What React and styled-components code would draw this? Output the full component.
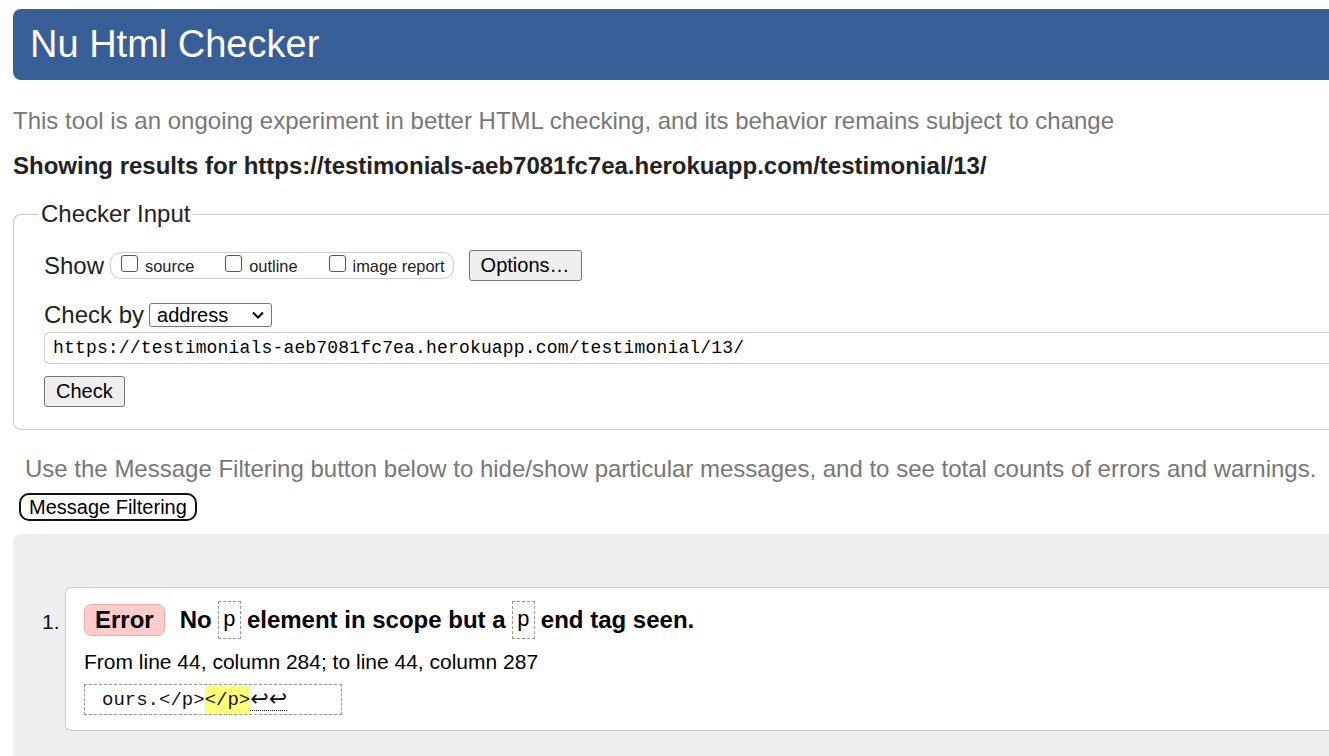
import React from 'react'
import styled, { createGlobalStyle } from 'styled-components'

const GlobalStyle = createGlobalStyle`
  html, body {
    margin: 0;
    padding: 0;
    background: #fff;
    overflow: hidden;
  }
  body {
    font-family: "Liberation Sans", Arial, sans-serif;
    color: #111;
  }
`

const Page = styled.div`
  width: 1420px;
  padding: 9px 0 0 13px;
`

const Header = styled.h1`
  margin: 0;
  height: 71px;
  display: flex;
  align-items: center;
  padding-left: 17px;
  background: #375e97;
  border-radius: 8px 0 0 8px;
  color: #fff;
  font-size: 38px;
  font-weight: 400;
`

const Intro = styled.p`
  margin: 27px 0 0;
  font-size: 24px;
  color: #777;
  line-height: 28px;
`

const Results = styled.p`
  margin: 17px 0 0;
  font-size: 24px;
  font-weight: 700;
  color: #222;
  line-height: 28px;
`

const Fieldset = styled.fieldset`
  margin: 20px 0 0;
  padding: 12px 0 22px 30px;
  border: 1px solid #ccc;
  border-radius: 8px 0 0 8px;
  border-right: none;
`

const Legend = styled.legend`
  font-size: 24px;
  color: #222;
  padding: 0 2px;
  margin-left: -5px;
`

const Row = styled.div`
  display: flex;
  align-items: center;
  margin-top: ${p => p.$top || 0}px;
`

const Label = styled.span`
  font-size: 24px;
  color: #222;
`

const Group = styled.div`
  display: flex;
  align-items: center;
  height: 25px;
  padding: 0 8px 0 10px;
  margin-left: 6px;
  border: 1px solid #ccc;
  border-radius: 11px;
`

const Opt = styled.label`
  display: flex;
  align-items: flex-end;
  gap: 7px;
  font-size: 16.4px;
  color: #222;
  margin-right: ${p => p.$last ? 0 : 31}px;
  line-height: 20px;
`

const Box = styled.span`
  width: 15px;
  height: 15px;
  border: 1px solid #555;
  border-radius: 3px;
  background: #fff;
  margin-bottom: 4px;
`

const Button = styled.button`
  font-family: "Liberation Sans", Arial, sans-serif;
  font-size: 20px;
  color: #000;
  background: #efefef;
  border: 1px solid #767676;
  border-radius: 3px;
  height: 31px;
  padding: 0 11px;
  margin-left: ${p => p.$ml || 0}px;
`

const Select = styled.div`
  display: flex;
  align-items: center;
  justify-content: space-between;
  width: 123px;
  height: 24px;
  margin-left: 5px;
  padding: 0 6px 0 7px;
  box-sizing: border-box;
  border: 1px solid #767676;
  border-radius: 3px;
  font-size: 20px;
  color: #000;
`

const UrlInput = styled.div`
  margin-top: 3px;
  height: 30px;
  display: flex;
  align-items: center;
  padding-left: 8px;
  border: 1px solid #ccc;
  border-right: none;
  border-radius: 6px 0 0 6px;
  font-family: "Liberation Mono", monospace;
  font-size: 18px;
  letter-spacing: 0.17px;
  color: #000;
`

const FilterNote = styled.p`
  margin: 25px 0 0 12px;
  font-size: 24px;
  color: #777;
  line-height: 28px;
`

const FilterButton = styled.button`
  font-family: "Liberation Sans", Arial, sans-serif;
  font-size: 20px;
  color: #000;
  background: #fff;
  border: 2px solid #111;
  border-radius: 10px;
  height: 28px;
  padding: 0 8px;
  margin: 10px 0 0 6px;
  display: block;
`

const ResultsPane = styled.div`
  margin-top: 13px;
  background: #eee;
  border-radius: 8px 0 0 0;
  padding: 53px 0 40px 29px;
`

const List = styled.ol`
  margin: 0;
  padding: 0;
  list-style: none;
`

const Item = styled.li`
  display: flex;
  align-items: flex-start;
`

const Num = styled.span`
  font-size: 21px;
  width: 23px;
  margin-top: 23px;
  color: #111;
`

const Card = styled.div`
  flex: 1;
  background: #fff;
  border: 1px solid #ccc;
  border-right: none;
  border-radius: 6px 0 0 6px;
  padding: 13px 0 15px 18px;
`

const Title = styled.div`
  display: flex;
  align-items: center;
  font-size: 24px;
  font-weight: 700;
  color: #000;
`

const Badge = styled.span`
  display: inline-flex;
  align-items: center;
  height: 30px;
  padding: 0 10px;
  background: #fcc;
  border: 1px solid #eaa;
  border-radius: 7px;
  margin-right: 15px;
`

const Code = styled.code`
  display: inline-flex;
  align-items: center;
  height: 36px;
  padding: 0 4px;
  margin: 0 6px;
  border: 1px dashed #999;
  font-family: "Liberation Mono", monospace;
  font-weight: 400;
  font-size: 22px;
`

const Location = styled.p`
  margin: 11px 0 0;
  font-size: 21px;
  color: #000;
`

const Extract = styled.div`
  display: inline-flex;
  align-items: center;
  margin-top: 10px;
  height: 31px;
  width: 258px;
  box-sizing: border-box;
  padding-left: 17px;
  border: 1px dashed #999;
  font-family: "Liberation Mono", monospace;
  font-size: 19px;
  color: #111;
  white-space: pre;
`

const Mark = styled.mark`
  background: #ff7;
  color: #111;
  padding: 3px 0 2px;
`

const Returns = styled.span`
  border-bottom: 1px dotted #111;
  font-family: "DejaVu Sans", sans-serif;
  font-size: 22px;
  line-height: 22px;
`

export default function App() {
  return (
    <Page>
      <GlobalStyle />
      <Header>Nu Html Checker</Header>
      <Intro>This tool is an ongoing experiment in better HTML checking, and its behavior remains subject to change</Intro>
      <Results>Showing results for https://testimonials-aeb7081fc7ea.herokuapp.com/testimonial/13/</Results>
      <Fieldset>
        <Legend>Checker Input</Legend>
        <Row $top={10}>
          <Label>Show</Label>
          <Group>
            <Opt><Box />source</Opt>
            <Opt><Box />outline</Opt>
            <Opt $last><Box />image report</Opt>
          </Group>
          <Button $ml={15}>Options…</Button>
        </Row>
        <Row $top={20}>
          <Label>Check by</Label>
          <Select>
            address
            <svg width="14" height="10" viewBox="0 0 14 10">
              <path d="M2 2.5 L7 7.5 L12 2.5" fill="none" stroke="#000" strokeWidth="2" />
            </svg>
          </Select>
        </Row>
        <UrlInput>https://testimonials-aeb7081fc7ea.herokuapp.com/testimonial/13/</UrlInput>
        <Row $top={12}>
          <Button>Check</Button>
        </Row>
      </Fieldset>
      <FilterNote>Use the Message Filtering button below to hide/show particular messages, and to see total counts of errors and warnings.</FilterNote>
      <FilterButton>Message Filtering</FilterButton>
      <ResultsPane>
        <List>
          <Item>
            <Num>1.</Num>
            <Card>
              <Title>
                <Badge>Error</Badge>
                No<Code>p</Code>element in scope but a<Code>p</Code>end tag seen.
              </Title>
              <Location>From line 44, column 284; to line 44, column 287</Location>
              <Extract>ours.&lt;/p&gt;<Mark>&lt;/p&gt;</Mark><Returns>↩↩</Returns></Extract>
            </Card>
          </Item>
        </List>
      </ResultsPane>
    </Page>
  )
}
